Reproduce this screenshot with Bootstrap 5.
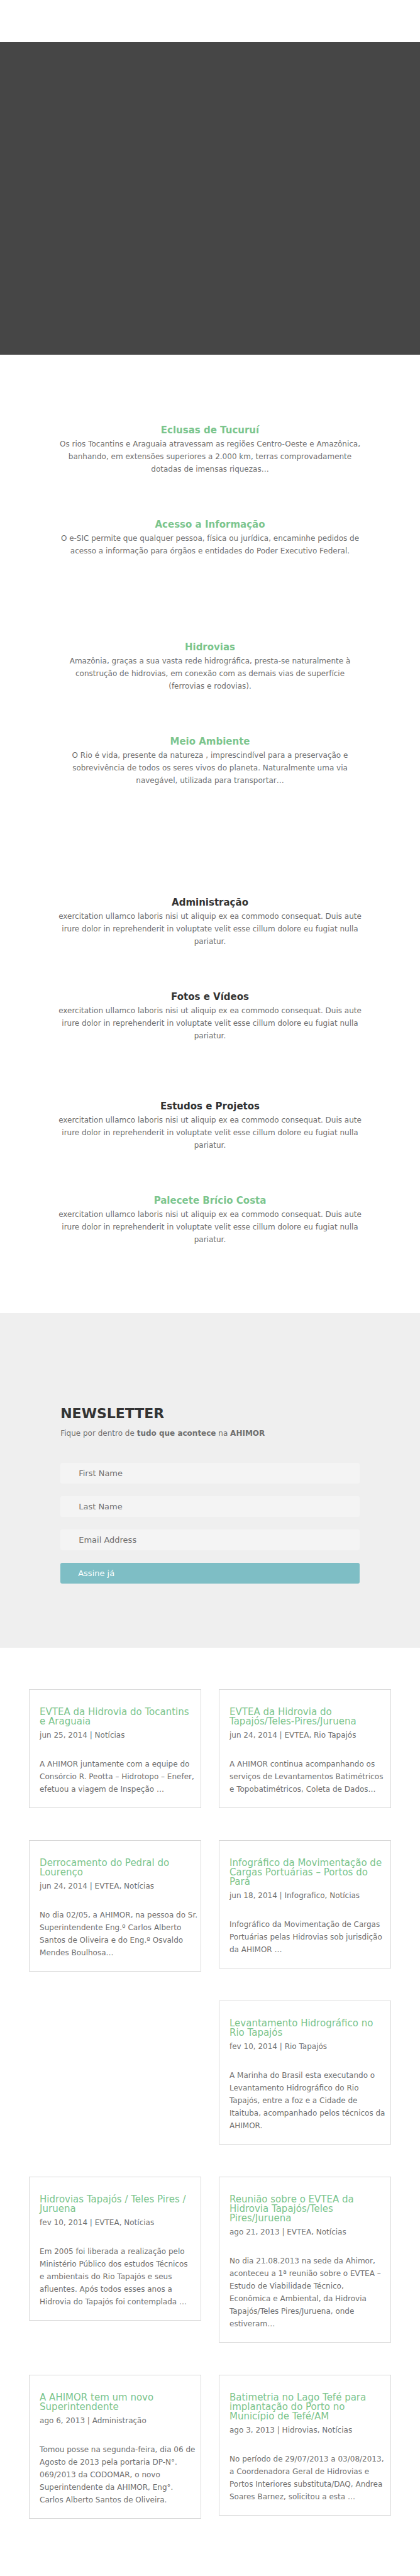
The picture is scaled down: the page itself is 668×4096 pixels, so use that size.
<!DOCTYPE html>
<html lang="pt-BR">
<head>
<meta charset="utf-8">
<meta name="viewport" content="width=device-width, initial-scale=1">
<title>AHIMOR</title>
<link rel="stylesheet" href="https://cdn.jsdelivr.net/npm/bootstrap@5.3.0/dist/css/bootstrap.min.css">
<style>
  body { font-family: "DejaVu Sans", sans-serif; font-size: 12px; line-height: 20px; color: #6f6f6f; background: #fff; }
  a { color: #7bc58d; text-decoration: none; }
  h1, h2, h3, p { margin: 0; }
  .topbar { height: 67px; }
  .hero { height: 497px; background: #464646; }
  .narrow { width: 71.2%; margin: 0 auto; }
  .blurbs { width: 73%; margin: 0 auto; display: flex; flex-direction: column; text-align: center; }
  .blurbs h2 { font-size: 15px; line-height: 15px; font-weight: 700; color: #333; margin-bottom: 4px; }
  .pair { display: flex; flex-direction: column; gap: 71px; }
  .services { padding: 113px 0 89px; gap: 136px; }
  .areas { padding: 88px 0 107px; gap: 95px; }
  .newsletter { background: #efefef; padding: 149px 0 102px; }
  .newsletter h2 { font-size: 22px; line-height: 22px; font-weight: 700; color: #333; margin-bottom: 10px; }
  .newsletter form { display: flex; flex-direction: column; gap: 20px; margin-top: 37px; }
  .newsletter .form-control { height: 33px; border: 0; border-radius: 3px; background: #f4f4f4; padding: 0 29px; font-size: 13px; color: #6f6f6f; }
  .newsletter .form-control::placeholder { color: #6f6f6f; opacity: 1; }
  .newsletter .btn { height: 33px; border: 0; border-radius: 3px; background: #7ebec5; color: #fff; padding: 0 28px; font-size: 13px; text-align: left; }
  .news { width: 86.2%; margin: 0 auto; padding: 66px 0 41px; }
  .news .row { --bs-gutter-x: 28px; }
  .post { border: 1px solid #d8d8d8; padding: 28px 4px 19px 16px; margin-bottom: 51px; }
  .post h2 { font-size: 15px; line-height: 15px; font-weight: 400; margin-bottom: 4px; }
  .post .meta { margin-bottom: 26px; }
</style>
</head>
<body>
<header class="topbar"></header>
<div class="hero"></div>

<main>
<section class="blurbs services">
  <div class="pair">
    <article>
      <h2><a href="#">Eclusas de Tucuruí</a></h2>
      <p>Os rios Tocantins e Araguaia atravessam as regiões Centro-Oeste e Amazônica, banhando, em extensões superiores a 2.000 km, terras comprovadamente dotadas de imensas riquezas…</p>
    </article>
    <article>
      <h2><a href="#">Acesso a Informação</a></h2>
      <p>O e-SIC permite que qualquer pessoa, física ou jurídica, encaminhe pedidos de acesso a informação para órgãos e entidades do Poder Executivo Federal.</p>
    </article>
  </div>
  <div class="pair">
    <article>
      <h2><a href="#">Hidrovias</a></h2>
      <p>Amazônia, graças a sua vasta rede hidrográfica, presta-se naturalmente à construção de hidrovias, em conexão com as demais vias de superfície (ferrovias e rodovias).</p>
    </article>
    <article>
      <h2><a href="#">Meio Ambiente</a></h2>
      <p>O Rio é vida, presente da natureza , imprescindível para a preservação e sobrevivência de todos os seres vivos do planeta. Naturalmente uma via navegável, utilizada para transportar…</p>
    </article>
  </div>
</section>

<section class="blurbs areas">
  <div class="pair">
    <article>
      <h2>Administração</h2>
      <p>exercitation ullamco laboris nisi ut aliquip ex ea commodo consequat. Duis aute irure dolor in reprehenderit in voluptate velit esse cillum dolore eu fugiat nulla pariatur.</p>
    </article>
    <article>
      <h2>Fotos e Vídeos</h2>
      <p>exercitation ullamco laboris nisi ut aliquip ex ea commodo consequat. Duis aute irure dolor in reprehenderit in voluptate velit esse cillum dolore eu fugiat nulla pariatur.</p>
    </article>
  </div>
  <div class="pair">
    <article>
      <h2>Estudos e Projetos</h2>
      <p>exercitation ullamco laboris nisi ut aliquip ex ea commodo consequat. Duis aute irure dolor in reprehenderit in voluptate velit esse cillum dolore eu fugiat nulla pariatur.</p>
    </article>
    <article>
      <h2><a href="#">Palecete Brício Costa</a></h2>
      <p>exercitation ullamco laboris nisi ut aliquip ex ea commodo consequat. Duis aute irure dolor in reprehenderit in voluptate velit esse cillum dolore eu fugiat nulla pariatur.</p>
    </article>
  </div>
</section>

<section class="newsletter">
  <div class="narrow">
    <h2>NEWSLETTER</h2>
    <p>Fique por dentro de <strong>tudo que acontece</strong> na <strong>AHIMOR</strong></p>
    <form>
      <input class="form-control" type="text" placeholder="First Name" aria-label="First Name">
      <input class="form-control" type="text" placeholder="Last Name" aria-label="Last Name">
      <input class="form-control" type="email" placeholder="Email Address" aria-label="Email Address">
      <button class="btn" type="button">Assine já</button>
    </form>
  </div>
</section>

<section class="news">
  <div class="row">
    <div class="col-6">
      <article class="post">
        <h2><a href="#">EVTEA da Hidrovia do Tocantins e&nbsp;Araguaia</a></h2>
        <p class="meta">jun 25, 2014 | Notícias</p>
        <p>A AHIMOR juntamente com a equipe do Consórcio R. Peotta – Hidrotopo – Enefer, efetuou a viagem de Inspeção …</p>
      </article>
    </div>
    <div class="col-6">
      <article class="post">
        <h2><a href="#">EVTEA da Hidrovia do Tapajós/Teles-Pires/Juruena</a></h2>
        <p class="meta">jun 24, 2014 | EVTEA, Rio Tapajós</p>
        <p>A AHIMOR continua acompanhando os serviços de Levantamentos Batimétricos e&nbsp;Topobatimétricos, Coleta de Dados…</p>
      </article>
    </div>
  </div>
  <div class="row">
    <div class="col-6">
      <article class="post">
        <h2><a href="#">Derrocamento do Pedral do Lourenço</a></h2>
        <p class="meta">jun 24, 2014 | EVTEA, Notícias</p>
        <p>No dia 02/05, a AHIMOR, na pessoa do Sr. Superintendente Eng.º Carlos Alberto Santos de Oliveira e do Eng.º Osvaldo Mendes Boulhosa…</p>
      </article>
    </div>
    <div class="col-6">
      <article class="post">
        <h2><a href="#">Infográfico da Movimentação de Cargas Portuárias – Portos do Pará</a></h2>
        <p class="meta">jun 18, 2014 | Infografico, Notícias</p>
        <p>Infográfico da Movimentação de Cargas Portuárias pelas Hidrovias sob jurisdição da&nbsp;AHIMOR …</p>
      </article>
      <article class="post">
        <h2><a href="#">Levantamento Hidrográfico no Rio&nbsp;Tapajós</a></h2>
        <p class="meta">fev 10, 2014 | Rio Tapajós</p>
        <p>A Marinha do Brasil esta executando o Levantamento Hidrográfico do Rio Tapajós, entre a foz e a Cidade de Itaituba, acompanhado pelos técnicos da AHIMOR.</p>
      </article>
    </div>
  </div>
  <div class="row">
    <div class="col-6">
      <article class="post">
        <h2><a href="#">Hidrovias Tapajós / Teles Pires / Juruena</a></h2>
        <p class="meta">fev 10, 2014 | EVTEA, Notícias</p>
        <p>Em 2005 foi liberada a realização pelo Ministério Público dos estudos Técnicos e&nbsp;ambientais do Rio Tapajós e seus afluentes. Após todos esses anos a Hidrovia do Tapajós foi contemplada …</p>
      </article>
    </div>
    <div class="col-6">
      <article class="post">
        <h2><a href="#">Reunião sobre o EVTEA da Hidrovia Tapajós/Teles Pires/Juruena</a></h2>
        <p class="meta">ago 21, 2013 | EVTEA, Notícias</p>
        <p>No dia 21.08.2013 na sede da Ahimor, aconteceu a 1ª reunião sobre o EVTEA – Estudo de Viabilidade Técnico, Econômica&nbsp;e Ambiental, da Hidrovia Tapajós/Teles Pires/Juruena, onde estiveram…</p>
      </article>
    </div>
  </div>
  <div class="row">
    <div class="col-6">
      <article class="post">
        <h2><a href="#">A AHIMOR tem um novo Superintendente</a></h2>
        <p class="meta">ago 6, 2013 | Administração</p>
        <p>Tomou posse na segunda-feira, dia 06 de Agosto de 2013 pela portaria DP-N°. 069/2013 da CODOMAR, o novo Superintendente da AHIMOR, Eng°. Carlos Alberto Santos de Oliveira.</p>
      </article>
    </div>
    <div class="col-6">
      <article class="post">
        <h2><a href="#">Batimetria no Lago Tefé para implantação do Porto no Município de Tefé/AM</a></h2>
        <p class="meta">ago 3, 2013 | Hidrovias, Notícias</p>
        <p>No período de 29/07/2013 a 03/08/2013, a&nbsp;Coordenadora Geral de Hidrovias e Portos Interiores substituta/DAQ, Andrea Soares Barnez, solicitou a esta …</p>
      </article>
    </div>
  </div>
</section>
</main>
<script src="https://cdn.jsdelivr.net/npm/bootstrap@5.3.0/dist/js/bootstrap.bundle.min.js"></script>
</body>
</html>
